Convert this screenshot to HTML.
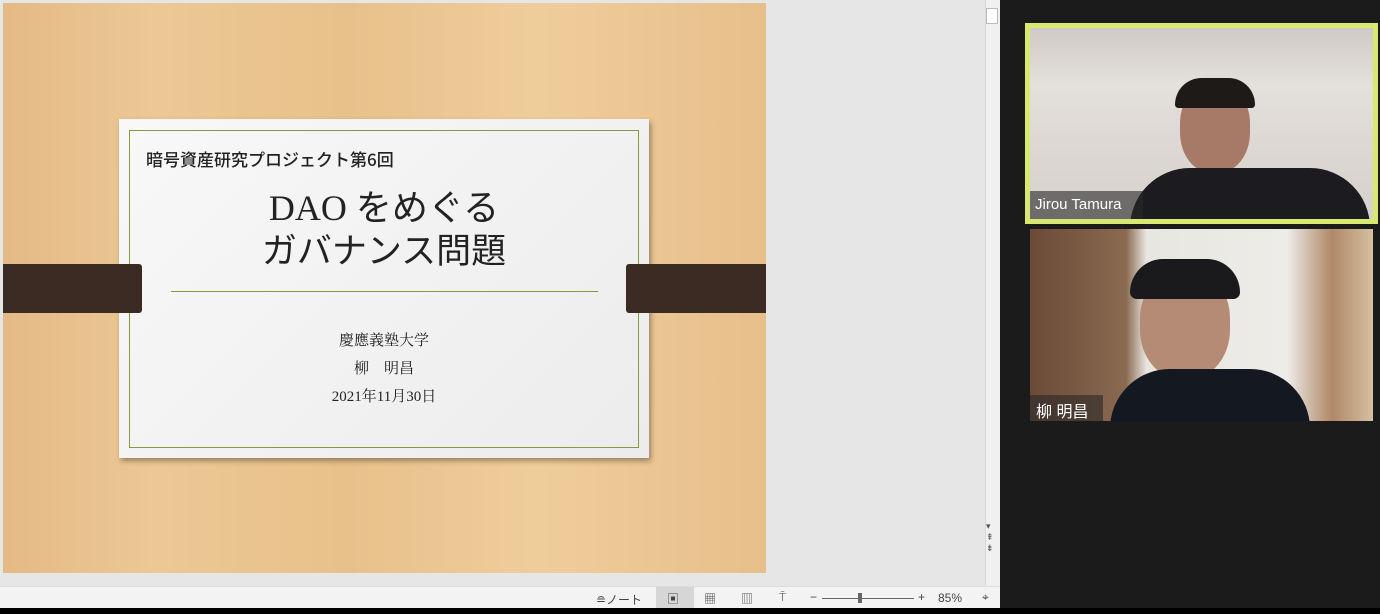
<!DOCTYPE html>
<html><head><meta charset="utf-8"><style>
*{margin:0;padding:0;box-sizing:border-box}
body{width:1380px;height:614px;overflow:hidden;background:#1b1b1b;position:relative;font-family:"Liberation Sans","Noto Sans CJK JP",sans-serif}
.abs{position:absolute}
.wood{left:3px;top:3px;width:763px;height:570px;background:linear-gradient(90deg,#e4ba86 0%,#ecc894 20%,#e8c08a 45%,#efcd9b 70%,#e7bf8a 100%)}
.card{left:119px;top:119px;width:530px;height:339px;background:linear-gradient(135deg,#f8f8f8,#ececec);box-shadow:2px 3px 5px rgba(0,0,0,.35)}
.inner{left:129px;top:130px;width:510px;height:318px;border:1px solid #8a9a3a}
.band{background:#3b2b23;top:264px;height:49px}
</style></head><body>
<div class="abs" style="left:0;top:0;width:985px;height:586px;background:#e6e6e6"></div>
<div class="abs" style="left:985px;top:0;width:15px;height:586px;background:#f0f0f0;border-left:1px solid #d8d8d8"></div>
<div class="abs" style="left:986px;top:8px;width:12px;height:16px;background:#fff;border:1px solid #bbb"></div>
<div class="abs" style="left:986px;top:521px;font-size:9px;color:#555">▾<br>⇞<br>⇟</div>
<div class="abs wood"></div>
<div class="abs card"></div>
<div class="abs inner"></div>
<div class="abs band" style="left:3px;width:139px;border-radius:0 3px 3px 0"></div>
<div class="abs band" style="left:626px;width:140px;border-radius:3px 0 0 3px"></div>
<div class="abs" style="left:146px;top:146px;font-size:17px;color:#222;font-family:'Noto Sans CJK JP',sans-serif;font-weight:500">暗号資産研究プロジェクト第6回</div>
<div class="abs" style="left:129px;top:183px;width:510px;text-align:center;font-size:36px;line-height:44px;color:#222;font-family:'Liberation Serif','Noto Sans CJK JP',serif">DAO <span style="font-family:'Noto Sans CJK JP',sans-serif;font-weight:400">をめぐる</span></div>
<div class="abs" style="left:129px;top:227px;width:510px;text-align:center;font-size:35px;line-height:44px;color:#222;font-family:'Noto Sans CJK JP',sans-serif;font-weight:400">ガバナンス問題</div>
<div class="abs" style="left:171px;top:291px;width:427px;height:1px;background:#8a9a3a"></div>
<div class="abs" style="left:129px;top:327px;width:510px;text-align:center;font-size:15px;line-height:28px;color:#222;font-family:'Liberation Serif','Noto Serif CJK SC',serif">慶應義塾大学<br>柳　明昌<br>2021年11月30日</div>
<div class="abs" style="left:0;top:586px;width:1000px;height:22px;background:#f3f3f3;border-top:1px solid #ddd;font-size:12px;color:#444">
<span class="abs" style="left:596px;top:4px">≘ノート</span>
<span class="abs" style="left:656px;top:0;width:38px;height:21px;background:#d6d6d6"></span>
<span class="abs" style="left:667px;top:3px">▣</span>
<span class="abs" style="left:704px;top:3px">▦</span>
<span class="abs" style="left:741px;top:3px">▥</span>
<span class="abs" style="left:779px;top:3px">⍑</span>
<span class="abs" style="left:810px;top:3px">−</span>
<span class="abs" style="left:822px;top:11px;width:92px;height:1px;background:#666"></span>
<span class="abs" style="left:858px;top:6px;width:4px;height:10px;background:#666"></span>
<span class="abs" style="left:918px;top:3px">+</span>
<span class="abs" style="left:938px;top:4px">85%</span>
<span class="abs" style="left:982px;top:3px">⌖</span>
</div>
<div class="abs" style="left:0;top:608px;width:1380px;height:6px;background:#000"></div>
<div class="abs" style="left:1025px;top:23px;width:353px;height:201px;background:#d8e870;padding:5px">
<div style="width:100%;height:100%;background:linear-gradient(180deg,#cfcac6 0%,#e4e0dc 30%,#ddd8d3 60%,#d6d1cc 100%);position:relative;overflow:hidden">
<div class="abs" style="left:150px;top:55px;width:70px;height:90px;border-radius:45%;background:#a67a66"></div>
<div class="abs" style="left:145px;top:50px;width:80px;height:30px;border-radius:40px 40px 5px 5px;background:#1e1a18"></div>
<div class="abs" style="left:100px;top:140px;width:240px;height:80px;border-radius:60px 60px 0 0;background:#1c1c20"></div>
<div class="abs" style="left:0;top:163px;width:113px;height:28px;background:rgba(40,40,40,.6)"></div>
<div class="abs" style="left:5px;top:168px;color:#fff;font-size:15px">Jirou Tamura</div>
</div></div>
<div class="abs" style="left:1030px;top:229px;width:343px;height:192px;background:linear-gradient(90deg,#6b4a38 0%,#8a6a50 28%,#e8e6e0 34%,#eeece8 75%,#b08868 88%,#d4c0a0 100%);overflow:hidden">
<div class="abs" style="left:110px;top:40px;width:90px;height:110px;border-radius:45%;background:#b58b76"></div>
<div class="abs" style="left:100px;top:30px;width:110px;height:40px;border-radius:50px 50px 10px 10px;background:#1a1a1c"></div>
<div class="abs" style="left:80px;top:140px;width:200px;height:70px;border-radius:60px 60px 0 0;background:#141820"></div>
<div class="abs" style="left:0;top:166px;width:73px;height:26px;background:rgba(40,40,40,.6)"></div>
<div class="abs" style="left:6px;top:169px;color:#fff;font-size:16px">柳 明昌</div>
</div>
</body></html>
